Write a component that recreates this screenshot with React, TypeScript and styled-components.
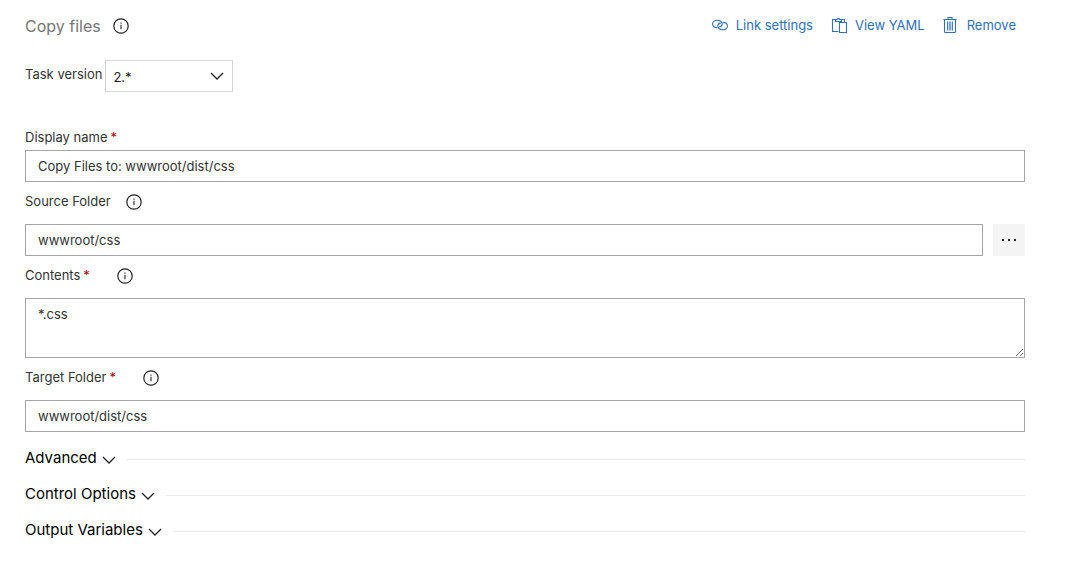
import React from 'react';
import styled, { createGlobalStyle } from 'styled-components';

const GlobalStyle = createGlobalStyle`
  *, *::before, *::after { box-sizing: border-box; }
  body {
    margin: 0;
    background: #fff;
    color: #333;
    font-family: Inter, "Liberation Sans", sans-serif;
    font-size: 13px;
    line-height: 18px;
  }
  button, input, select, textarea { font: inherit; color: inherit; margin: 0; }
  svg { display: block; flex: none; }
`;

const Page = styled.main`
  padding: 8px 48px 16px 25px;
`;

const Header = styled.header`
  display: flex;
  align-items: center;
  justify-content: space-between;
  height: 36px;
`;

const TitleGroup = styled.div`
  display: flex;
  align-items: center;
  gap: 12px;
`;

const Title = styled.h1`
  margin: 0;
  font-size: 16px;
  font-weight: 400;
  line-height: 24px;
  color: #767676;
`;

const Actions = styled.nav`
  display: flex;
  gap: 18px;
  padding: 0 9px 2px 0;
`;

const Action = styled.button`
  display: flex;
  align-items: center;
  gap: 8px;
  padding: 0;
  border: 0;
  background: none;
  color: #2f71ba;
  cursor: pointer;
`;

const InfoButton = styled.button`
  display: flex;
  padding: 0;
  border: 0;
  background: none;
  color: #222;
  cursor: pointer;
`;

const VersionRow = styled.div`
  display: flex;
  gap: 3px;
  margin: 16px 0 32px;
`;

const VersionLabel = styled.label`
  padding-top: 5px;
`;

const SelectBox = styled.div`
  position: relative;
  width: 128px;

  svg {
    position: absolute;
    top: 10px;
    right: 9px;
    pointer-events: none;
  }
`;

const Select = styled.select`
  display: block;
  width: 100%;
  height: 32px;
  padding: 2px 8px 0 7px;
  border: 1px solid #d6d6d6;
  border-radius: 0;
  background: #fff;
  color: #222;
  appearance: none;
`;

const LabelRow = styled.div<{ $compact?: boolean }>`
  display: flex;
  align-items: center;
  gap: 15px;
  height: ${(p) => (p.$compact ? 26 : 42)}px;
  padding-bottom: ${(p) => (p.$compact ? 0 : 2)}px;

  label { padding-bottom: ${(p) => (p.$compact ? 0 : 2)}px; }
`;

const Required = styled.span`
  margin: 0 12px 0 3px;
  color: #a80000;
`;

const InputRow = styled.div`
  display: flex;
  gap: 10px;
`;

const Input = styled.input`
  flex: 1;
  min-width: 0;
  height: 32px;
  padding: 0 12px;
  border: 1px solid #a6a6a6;
  border-radius: 0;
  background: #fff;
  outline: none;
`;

const TextArea = styled.textarea`
  display: block;
  width: 100%;
  height: 60px;
  padding: 6px 12px;
  border: 1px solid #a6a6a6;
  border-radius: 0;
  background: #fff;
  outline: none;
  resize: vertical;
`;

const BrowseButton = styled.button`
  display: flex;
  align-items: center;
  justify-content: center;
  width: 32px;
  height: 32px;
  padding: 0;
  border: 0;
  background: #f4f4f4;
  color: #222;
  cursor: pointer;
`;

const Sections = styled.div`
  padding-top: 8px;
`;

const SectionRow = styled.div`
  display: flex;
  align-items: center;
  gap: 11px;
  height: 36px;

  &::after {
    content: '';
    flex: 1;
    margin-top: 2px;
    border-top: 1px solid #eaeaea;
  }
`;

const SectionButton = styled.button`
  display: flex;
  align-items: center;
  gap: 5px;
  padding: 0;
  border: 0;
  background: none;
  color: #000;
  font-size: 15px;
  line-height: 20px;
  cursor: pointer;

  svg { margin-top: 4px; }
`;

function Info({ label }: { label: string }) {
  return (
    <InfoButton type="button" aria-label={label}>
      <svg width="16" height="16" viewBox="0 0 16 16" fill="none" stroke="currentColor">
        <circle cx="8" cy="8" r="7.2" strokeWidth="1.2" />
        <path d="M8 6.8v4.4" strokeWidth="1.1" />
        <path d="M8 4.6v1.2" strokeWidth="1.1" />
      </svg>
    </InfoButton>
  );
}

function Chevron() {
  return (
    <svg width="14" height="12" viewBox="0 0 14 12" fill="none" stroke="#222" strokeWidth="1.3">
      <path d="M1 3l6 6 6-6" />
    </svg>
  );
}

function LinkIcon() {
  return (
    <svg width="16" height="16" viewBox="0 0 16 16" fill="none" stroke="currentColor" strokeWidth="1.1">
      <path d="M5.400 10.600C2.600 10.600.6 9 .6 6.900S2.600 3.200 5 3.200c2.800 0 5.200 1.700 5.200 3.800 0 1.500-1.200 2.700-2.900 2.900" />
      <path d="M10.600 5.400c2.800 0 4.800 1.600 4.800 3.700s-2 3.700-4.400 3.700c-2.800 0-5.200-1.700-5.200-3.800 0-1.500 1.200-2.700 2.900-2.900" />
    </svg>
  );
}

function ClipboardIcon() {
  return (
    <svg width="16" height="16" viewBox="0 0 16 16" fill="none" stroke="currentColor" strokeWidth="1.1">
      <path d="M7.500 14.500H1.500v-12H4.500m6 0h3V5.500" />
      <path d="M4.500 4.500v-2h1.700a1.400 1.400 0 0 1 2.600 0h1.700v2z" />
      <path d="M8.500 5.500h7v10h-7z" />
    </svg>
  );
}

function TrashIcon() {
  return (
    <svg width="16" height="16" viewBox="0 0 16 16" fill="none" stroke="currentColor" strokeWidth="1.1">
      <path d="M.5 2.500h13M5 2.500v-2h4v2M1.500 2.500v12q0 1 1 1h9q1 0 1-1v-12" />
      <path d="M4.500 4.500v9M6.200 4.500v9M7.800 4.500v9M9.500 4.500v9" strokeWidth="0.900" />
    </svg>
  );
}

function DotsIcon() {
  return (
    <svg width="16" height="16" viewBox="0 0 16 16" fill="currentColor">
      <path d="M1 7h2v2H1zM7 7h2v2H7zM13 7h2v2h-2z" />
    </svg>
  );
}

interface FieldLabelProps {
  htmlFor: string;
  text: string;
  required?: boolean;
  info?: boolean;
  compact?: boolean;
}

function FieldLabel({ htmlFor, text, required, info, compact }: FieldLabelProps) {
  return (
    <LabelRow $compact={compact}>
      <label htmlFor={htmlFor}>
        {text}
        {required && <Required>*</Required>}
      </label>
      {info && <Info label={`About ${text}`} />}
    </LabelRow>
  );
}

export default function App() {
  return (
    <>
      <GlobalStyle />
      <Page>
        <Header>
          <TitleGroup>
            <Title>Copy files</Title>
            <Info label="About Copy files" />
          </TitleGroup>
          <Actions>
            <Action type="button"><LinkIcon />Link settings</Action>
            <Action type="button"><ClipboardIcon />View YAML</Action>
            <Action type="button"><TrashIcon />Remove</Action>
          </Actions>
        </Header>

        <VersionRow>
          <VersionLabel htmlFor="version">Task version</VersionLabel>
          <SelectBox>
            <Select id="version" defaultValue="2.*">
              <option>2.*</option>
            </Select>
            <Chevron />
          </SelectBox>
        </VersionRow>

        <FieldLabel htmlFor="name" text="Display name" required compact />
        <InputRow>
          <Input id="name" defaultValue="Copy Files to: wwwroot/dist/css" />
        </InputRow>

        <FieldLabel htmlFor="source" text="Source Folder" info />
        <InputRow>
          <Input id="source" defaultValue="wwwroot/css" />
          <BrowseButton type="button" aria-label="Browse source folder"><DotsIcon /></BrowseButton>
        </InputRow>

        <FieldLabel htmlFor="contents" text="Contents" required info />
        <TextArea id="contents" defaultValue="*.css" />

        <FieldLabel htmlFor="target" text="Target Folder" required info />
        <InputRow>
          <Input id="target" defaultValue="wwwroot/dist/css" />
        </InputRow>

        <Sections>
          {['Advanced', 'Control Options', 'Output Variables'].map((name) => (
            <SectionRow key={name}>
              <SectionButton type="button" aria-expanded={false}>
                {name}
                <Chevron />
              </SectionButton>
            </SectionRow>
          ))}
        </Sections>
      </Page>
    </>
  );
}
